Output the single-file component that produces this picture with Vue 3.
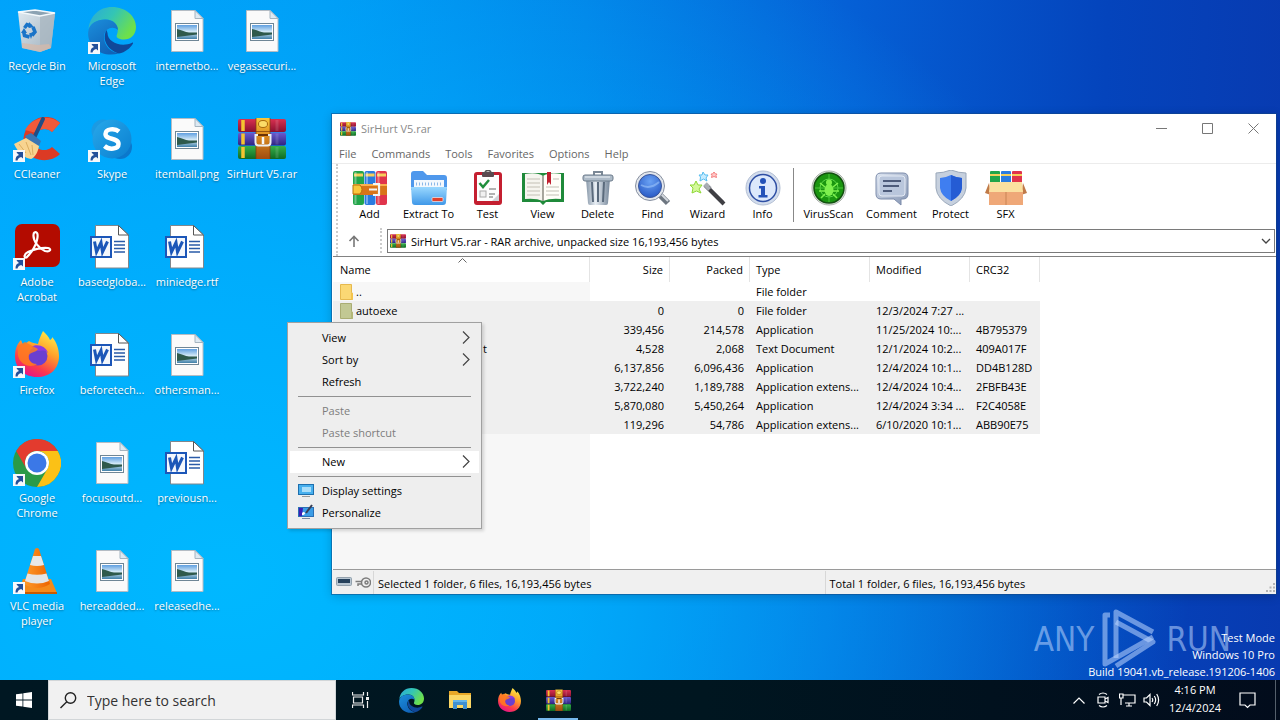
<script setup>
import { ref } from 'vue'

// desktop icons, filled column by column
const shortcuts = [
  { label: 'Recycle Bin', icon: 'bin' },
  { label: 'CCleaner', icon: 'ccleaner', link: true },
  { label: 'Adobe Acrobat', icon: 'acrobat', link: true },
  { label: 'Firefox', icon: 'firefox', link: true },
  { label: 'Google Chrome', icon: 'chrome', link: true },
  { label: 'VLC media player', icon: 'vlc', link: true },
  { label: 'Microsoft Edge', icon: 'edge', link: true },
  { label: 'Skype', icon: 'skype', link: true },
  { label: 'basedgloba...', icon: 'word' },
  { label: 'beforetech...', icon: 'word' },
  { label: 'focusoutd...', icon: 'image' },
  { label: 'hereadded...', icon: 'image' },
  { label: 'internetbo...', icon: 'image' },
  { label: 'itemball.png', icon: 'image' },
  { label: 'miniedge.rtf', icon: 'word' },
  { label: 'othersman...', icon: 'image' },
  { label: 'previousn...', icon: 'word' },
  { label: 'releasedhe...', icon: 'image' },
  { label: 'vegassecuri...', icon: 'image' },
  { label: 'SirHurt V5.rar', icon: 'rar' },
]

const menus = ['File', 'Commands', 'Tools', 'Favorites', 'Options', 'Help']

const tools = [
  { label: 'Add', icon: 'add' },
  { label: 'Extract To', icon: 'extract', wide: true },
  { label: 'Test', icon: 'test' },
  { label: 'View', icon: 'view' },
  { label: 'Delete', icon: 'delete' },
  { label: 'Find', icon: 'find' },
  { label: 'Wizard', icon: 'wizard' },
  { label: 'Info', icon: 'info' },
]

const extraTools = [
  { label: 'VirusScan', icon: 'virus', wide: true },
  { label: 'Comment', icon: 'comment', wide: true },
  { label: 'Protect', icon: 'protect' },
  { label: 'SFX', icon: 'sfx' },
]

const files = [
  { name: '..', icon: 'folder', size: '', packed: '', type: 'File folder', modified: '', crc: '' },
  { name: 'autoexe', icon: 'folder', size: '0', packed: '0', type: 'File folder', modified: '12/3/2024 7:27 ...', crc: '', selected: true },
  { name: '', size: '339,456', packed: '214,578', type: 'Application', modified: '11/25/2024 10:...', crc: '4B795379', selected: true },
  { name: 't', tail: true, size: '4,528', packed: '2,068', type: 'Text Document', modified: '12/1/2024 10:2...', crc: '409A017F', selected: true },
  { name: '', size: '6,137,856', packed: '6,096,436', type: 'Application', modified: '12/4/2024 10:1...', crc: 'DD4B128D', selected: true },
  { name: '', size: '3,722,240', packed: '1,189,788', type: 'Application extens...', modified: '12/4/2024 10:4...', crc: '2FBFB43E', selected: true },
  { name: '', size: '5,870,080', packed: '5,450,264', type: 'Application', modified: '12/4/2024 3:34 ...', crc: 'F2C4058E', selected: true },
  { name: '', size: '119,296', packed: '54,786', type: 'Application extens...', modified: '6/10/2020 10:1...', crc: 'ABB90E75', selected: true },
]

const contextMenu = [
  [{ label: 'View', sub: true }, { label: 'Sort by', sub: true }, { label: 'Refresh' }],
  [{ label: 'Paste', disabled: true }, { label: 'Paste shortcut', disabled: true }],
  [{ label: 'New', sub: true }],
  [{ label: 'Display settings', icon: 'display' }, { label: 'Personalize', icon: 'personalize' }],
]

const pinned = [
  { icon: 'edge', size: 25 },
  { icon: 'explorer', size: 24 },
  { icon: 'firefox', size: 25 },
  { icon: 'rar', size: 25, active: true },
]

const hovered = ref('New')
const search = ref('')
</script>

<template>
  <!-- shared icons -->
  <svg class="defs" width="0" height="0">
    <defs>
      <linearGradient id="gBin" x1="0" y1="0" x2="1" y2="1">
        <stop offset="0" stop-color="#dfe9f0" /><stop offset="1" stop-color="#9fb0bd" />
      </linearGradient>
      <linearGradient id="gEdgeTop" x1="0" y1="0" x2="1" y2="0.5">
        <stop offset="0" stop-color="#2aa8dc" /><stop offset="0.5" stop-color="#33c5b5" /><stop offset="1" stop-color="#6ee04a" />
      </linearGradient>
      <linearGradient id="gEdgeLeft" x1="0" y1="0" x2="0.6" y2="1">
        <stop offset="0" stop-color="#1b8fdc" /><stop offset="1" stop-color="#1063b8" />
      </linearGradient>
      <linearGradient id="gSkype" x1="0" y1="0" x2="1" y2="1">
        <stop offset="0" stop-color="#28a8ea" /><stop offset="1" stop-color="#0a7fd0" />
      </linearGradient>
      <linearGradient id="gFox" x1="0.8" y1="0" x2="0.3" y2="1">
        <stop offset="0" stop-color="#fff04a" /><stop offset="0.4" stop-color="#ffa12a" /><stop offset="0.75" stop-color="#fb3b4c" /><stop offset="1" stop-color="#e5128a" />
      </linearGradient>
      <linearGradient id="gOrange" x1="0" y1="0" x2="1" y2="0">
        <stop offset="0" stop-color="#ff9a2a" /><stop offset="1" stop-color="#ec6400" />
      </linearGradient>
      <linearGradient id="gPhoto" x1="0" y1="0" x2="0" y2="1">
        <stop offset="0" stop-color="#5f9fe0" /><stop offset="0.5" stop-color="#d9edf8" /><stop offset="1" stop-color="#3f7fa8" />
      </linearGradient>
      <linearGradient id="gRed" x1="0" y1="0" x2="0" y2="1">
        <stop offset="0" stop-color="#d83050" /><stop offset="1" stop-color="#8a1030" />
      </linearGradient>
      <linearGradient id="gViolet" x1="0" y1="0" x2="0" y2="1">
        <stop offset="0" stop-color="#6a5ad0" /><stop offset="1" stop-color="#2f2480" />
      </linearGradient>
      <linearGradient id="gGreen" x1="0" y1="0" x2="0" y2="1">
        <stop offset="0" stop-color="#35b04a" /><stop offset="1" stop-color="#0f6a24" />
      </linearGradient>
      <linearGradient id="gGold" x1="0" y1="0" x2="0" y2="1">
        <stop offset="0" stop-color="#f8c83c" /><stop offset="0.4" stop-color="#e09020" /><stop offset="1" stop-color="#a04c10" />
      </linearGradient>
      <linearGradient id="gBlue" x1="0" y1="0" x2="0" y2="1">
        <stop offset="0" stop-color="#9ad8ff" /><stop offset="1" stop-color="#3f98e8" />
      </linearGradient>
      <linearGradient id="gSteel" x1="0" y1="0" x2="1" y2="0">
        <stop offset="0" stop-color="#8797a8" /><stop offset="0.4" stop-color="#e8eef4" /><stop offset="1" stop-color="#76879a" />
      </linearGradient>
      <linearGradient id="gComment" x1="0" y1="0" x2="1" y2="1">
        <stop offset="0" stop-color="#dfe7f3" /><stop offset="1" stop-color="#8494b2" />
      </linearGradient>
      <radialGradient id="gLens" cx="0.5" cy="0.3" r="0.8">
        <stop offset="0" stop-color="#6aa2f4" /><stop offset="1" stop-color="#1f50c0" />
      </radialGradient>
    </defs>

    <symbol id="link" viewBox="0 0 12 12">
      <rect width="12" height="12" fill="#f6f8fb" />
      <path d="M2.500 10.500C2.500 7.500 3.500 5.500 6 5L4.200 3.200L3.500 2H10V8.500L8.200 7C6 7.500 5 8.500 4.500 10.500Z" fill="#24509a" />
    </symbol>

    <symbol id="bin" viewBox="0 0 48 48">
      <path d="M5 5L22 3L42 6L38 41L27 45L9 41Z" fill="url(#gBin)" />
      <path d="M27 9L42 6L38 41L27 45Z" fill="#a9b6c1" opacity="0.8" />
      <path d="M5 5L22 3L42 6L27 9Z" fill="#8ca3b3" stroke="#f3f8fb" stroke-width="1.500" />
      <path d="M9 41L27 45L38 41L36 37L25 38L9 36Z" fill="#d8b9a8" opacity="0.7" />
      <g fill="none" stroke="#1a74c8" stroke-width="3.500">
        <path d="M11.500 21L14 17.500L18 19" />
        <path d="M20 20L22 25L19 28.500" />
        <path d="M16.500 30L11.500 28.500L10.500 24" />
      </g>
      <path d="M16 15L21 20L15.500 21ZM20.500 25L18 32L16 26.500ZM8 26L11 21L14 26Z" fill="#1a74c8" />
    </symbol>

    <symbol id="edge" viewBox="0 0 48 48">
      <path d="M0.500 22C2 9 11 0 24 0C38 0 48 9.500 48 20C48 28 42.500 32.500 36 32.500C30 32.500 27.500 30 29 27.500C31 24 30 13 18 12.500C9 12.300 2.500 17 0.500 22Z" fill="url(#gEdgeTop)" />
      <path d="M0.200 25C1 16.500 9 12.500 17 12.500C26 12.500 30 18 30 23C25 18.500 17 21 16 29C15.500 38 22 45 31 46.500C13 51.500 -1 39 0.200 25Z" fill="url(#gEdgeLeft)" />
      <path d="M18.500 23C14 31 18 42.500 31 46.500C37 45.500 42.500 41 45 36.500C45.300 35.500 44.500 35.300 44 35.700C33 41 19.500 35 19.500 26Z" fill="#10489a" />
    </symbol>

    <symbol id="ccleaner" viewBox="0 0 48 48">
      <path d="M47 8L39 17C33 11 22 14 21 24C20 33 31 39 39 32L47 39C37 49 19 46 13 36C5 19 18 1 33 2C39 2 43 4 47 8Z" fill="#dc3a24" />
      <path d="M47 8L39 17C35 13 27 13 23 18L12 15C18 3 36 -2 47 8Z" fill="#f05a3a" />
      <path d="M30 4L21 23" stroke="#1f4d86" stroke-width="4" stroke-linecap="round" />
      <path d="M12 21L18 18L28 26L26 31L17 29Z" fill="#3a76b4" />
      <path d="M1 29L13 23L26 31C25 38 21 43 18 44C12 43 6 39 1 29Z" fill="#f8d490" />
      <path d="M6 29L13 38M13 27L18 40M19 30L20 40" stroke="#dcae60" stroke-width="1" />
    </symbol>

    <symbol id="skype" viewBox="0 0 48 48">
      <circle cx="15" cy="16" r="11.500" fill="#1c9ae2" />
      <circle cx="32" cy="32" r="12" fill="#0b78cc" />
      <circle cx="24" cy="24" r="19.500" fill="url(#gSkype)" />
      <path d="M31 16.500C27 13 17.500 13.500 17.500 19C17.500 25.500 30.500 22 30.500 29C30.500 34.500 21 35 16.500 31" fill="none" stroke="#fff" stroke-width="4.500" />
    </symbol>

    <symbol id="acrobat" viewBox="0 0 48 48">
      <rect x="2" y="1" width="45" height="43" rx="7" fill="#b30b00" />
      <path d="M21.500 9.500C24 8 25.500 11 24 17C22 26 17 31 13.500 34.500C10.500 35 11 31 15 29C22 26 30 24.500 35 25C39 26 37 29.500 32 28C26 25.500 20 18 20.500 12C20.500 10.500 21 9.800 21.500 9.500Z" fill="none" stroke="#fff" stroke-width="2.200" />
    </symbol>

    <symbol id="firefox" viewBox="0 0 48 48">
      <path d="M30 0C33 3 36 6 37 9C39 8 39 7 39 6C44 11 46 19 46 25C46 38 37 46 24 46C11 46 2 37 2 25C2 18 4 13 8 9L10 14L16 10C19 12 22 12 25 13C26 8 28 4 30 0Z" fill="url(#gFox)" />
      <circle cx="25" cy="25" r="9.500" fill="#6a3fd0" />
      <path d="M18 16C24 12 33 15 35 22C31 18 28 20 25 20Z" fill="#8d3be0" />
      <path d="M5 15L12 11L25 18C23 22 19 20 16 24C14 28 18 33 24 33C17 38 6 33 5 24Z" fill="#ff7a20" opacity="0.85" />
    </symbol>

    <symbol id="chrome" viewBox="0 0 48 48">
      <circle cx="24" cy="24" r="24" fill="#2a9a48" />
      <path d="M3.200 12A24 24 0 0 1 44.800 12H24A12 12 0 0 0 13.600 30Z" fill="#e33b2e" />
      <path d="M44.800 12A24 24 0 0 1 24 48L34.400 30A12 12 0 0 0 24 12Z" fill="#fbc116" />
      <circle cx="24" cy="24" r="12" fill="#fff" />
      <circle cx="24" cy="24" r="9.500" fill="#3b78e7" />
    </symbol>

    <symbol id="vlc" viewBox="0 0 48 48">
      <path d="M10 32H38L44 46H5Z" fill="#f58a1a" />
      <path d="M5 45L44 45L44 47H4Z" fill="#c85a00" />
      <path d="M22 2Q24 0 26 2L37 37Q24 45 11 37Z" fill="url(#gOrange)" />
      <path d="M20 9H28L31 18Q24 20 17 18Z" fill="#e8e8e8" />
      <path d="M14.500 26.500Q24 29 33.500 26.500L36 34Q24 39 12 34Z" fill="#e4e4e4" />
    </symbol>

    <symbol id="image" viewBox="0 0 48 48">
      <path d="M8.500 3.500H32L40 11.500V44.500H8.500Z" fill="#fafafa" stroke="#b4bcc4" />
      <path d="M32 3.500V11.500H40Z" fill="#dde9f2" stroke="#a4b4c0" />
      <rect x="12.500" y="16.500" width="23" height="17" fill="#fff" stroke="#6f8696" />
      <rect x="14" y="18" width="20" height="14" fill="url(#gPhoto)" />
      <path d="M14 22C19 23 22 25 26 25.500H34V27.500L14 30Z" fill="#2f5a4c" />
    </symbol>

    <symbol id="word" viewBox="0 0 48 48">
      <path d="M7.500 2.500H30.500L40.500 12V45H7.500Z" fill="#fff" stroke="#80868c" />
      <path d="M30.500 2.500V12H40.500Z" fill="#fff" stroke="#555" />
      <path d="M26 18.500H37M26 22H37M26 25.500H37M26 29H37" stroke="#2a5ba8" stroke-width="1.300" />
      <rect x="2" y="13" width="22" height="22" fill="#1c56b8" />
      <rect x="4" y="15" width="18" height="18" fill="#f4f7fc" />
      <path d="M6.500 18.500L8.500 29L13 19.500L14.500 29L19.500 18.500" fill="none" stroke="#1c56b8" stroke-width="3" />
    </symbol>

    <symbol id="rar" viewBox="0 0 48 48">
      <rect x="0" y="4" width="48" height="13" rx="2" fill="url(#gRed)" />
      <rect x="0" y="17.500" width="48" height="13" rx="2" fill="url(#gViolet)" />
      <rect x="0" y="31" width="48" height="13" rx="2" fill="url(#gGreen)" />
      <path d="M5 5V16M5 18.500V29.500M5 32V43" stroke="#f4c430" stroke-width="3.500" />
      <path d="M39 5V16M39 18.500V29.500M39 32V43" stroke="#fff" stroke-opacity="0.12" stroke-width="3" />
      <rect x="18" y="3" width="14" height="41" fill="url(#gGold)" />
      <path d="M18 3V44M32 3V44M18 16.500H32" stroke="#7a3c08" stroke-opacity="0.7" />
      <ellipse cx="25" cy="9" rx="4.500" ry="3.500" fill="#fbdc68" stroke="#a8680c" />
      <path d="M19 20H31" stroke="#6a3408" stroke-width="2" />
      <path d="M20 20H17.500V27.500Q17.500 30.500 20.500 30.500H29.500Q32.500 30.500 32.500 27.500V20H30" fill="none" stroke="#eceff2" stroke-width="2" />
      <path d="M25 22V29" stroke="#f6f8fa" stroke-width="2.500" />
    </symbol>

    <symbol id="add" viewBox="0 0 36 36">
      <rect x="1" y="1" width="11" height="34" rx="2" fill="#22a54a" />
      <rect x="12.500" y="1" width="11" height="34" rx="2" fill="#2a7be0" />
      <rect x="24" y="1" width="11" height="34" rx="2" fill="#e0344c" />
      <path d="M2 5H11M13.500 5H22.500M25 5H34" stroke="#f6cf5a" stroke-width="3" />
      <path d="M3.500 2V34M15 2V34M26.500 2V34" stroke="#fff" stroke-opacity="0.35" stroke-width="2" />
      <rect x="1" y="14" width="34" height="11" fill="#d8741a" />
      <path d="M1 15H35" stroke="#f9b050" stroke-width="2" />
      <path d="M1 15H8Q12 19.500 8 24H1Z" fill="#fbc83c" stroke="#b8700c" />
      <path d="M21 14H27V25H21M17 19.500H25" fill="none" stroke="#f2f4f7" stroke-width="2.200" />
    </symbol>

    <symbol id="extract" viewBox="0 0 36 36">
      <path d="M0 4Q0 1 3 1H12L16 5H33Q36 5 36 8V20H0Z" fill="#4f98ec" />
      <rect x="3" y="10" width="30" height="14" fill="#f4f8fd" />
      <path d="M5 14H31" stroke="#8cb8e8" stroke-width="3" stroke-dasharray="1 2" />
      <path d="M0 17H36L35 32Q35 35 32 35H4Q1 35 1 32Z" fill="url(#gBlue)" />
      <rect x="21" y="27.500" width="11" height="4" rx="1" fill="#e2402c" stroke="#fff" stroke-width="0.600" />
    </symbol>

    <symbol id="test" viewBox="0 0 36 36">
      <rect x="4" y="2" width="28" height="33" rx="3" fill="#c41f30" />
      <rect x="7" y="5" width="22" height="26" fill="#fdfdfd" />
      <path d="M22 31L29 24V31Z" fill="#d0d3d8" />
      <rect x="12" y="2" width="12" height="5" rx="1" fill="#5a4a50" />
      <path d="M15 3C15 -0.500 21 -0.500 21 3" fill="none" stroke="#555" stroke-width="1.500" />
      <path d="M9.500 13L13 17L19 10" fill="none" stroke="#1f8f3c" stroke-width="2.500" />
      <path d="M19 19H26M19 24H25M19 27H23" stroke="#999" stroke-width="1.500" />
      <rect x="10" y="21" width="6" height="6" fill="#f1f1f1" stroke="#aaa" />
    </symbol>

    <symbol id="view" viewBox="0 0 42 36">
      <path d="M0 3H42V32H24L21 35L18 32H0Z" fill="#1f8a3a" />
      <path d="M3 4Q15 2 21 6V31Q14 28 3 29Z" fill="#f6f5ef" />
      <path d="M39 4Q27 2 21 6V31Q28 28 39 29Z" fill="#fffef8" />
      <path d="M5 9H18M5 13H18M5 17H18M5 21H18M5 25H18M31 9H37M24 17H37M24 21H37M24 25H37" stroke="#c3c0b5" />
      <path d="M21 6V31" stroke="#8b8a80" stroke-width="1.500" />
      <path d="M25 2H29V15L27 12L25 15Z" fill="#c02030" />
    </symbol>

    <symbol id="delete" viewBox="0 0 36 36">
      <path d="M6 9H30L28 33Q28 35 26 35H10Q8 35 8 33Z" fill="url(#gSteel)" />
      <path d="M12 12L13 32M18 12V32M24 12L23 32" stroke="#5a6a7c" stroke-width="2" />
      <path d="M14 5V2H22V5" fill="none" stroke="#7b8896" stroke-width="2" />
      <rect x="3" y="5" width="30" height="6" rx="2" fill="#aebbc8" stroke="#6b7a8a" />
      <path d="M5 7H30" stroke="#eef3f7" />
    </symbol>

    <symbol id="find" viewBox="0 0 36 36">
      <path d="M25 25L33 33" stroke="#6d7680" stroke-width="6" />
      <path d="M25 23L33 31" stroke="#d3d8de" stroke-width="2" />
      <circle cx="15" cy="16" r="14.500" fill="#e2e6ec" stroke="#8790a0" />
      <circle cx="15" cy="16" r="11.500" fill="url(#gLens)" stroke="#3a559a" />
      <path d="M6 15Q15 20 24 12" fill="none" stroke="#9cc4fa" stroke-opacity="0.6" stroke-width="2" />
    </symbol>

    <symbol id="wizard" viewBox="0 0 36 36">
      <path d="M15 15L34 34" stroke="#3f3f44" stroke-width="4" />
      <path d="M15 14L20 19" stroke="#a9adb4" stroke-width="5" />
      <path d="M19 16L34 31" stroke="#8a8a90" />
      <path d="M6 11L8 15L12 15L9 19L11 23L6.500 21L2 23L3 18L0 15L4 15Z" fill="#d4f89a" stroke="#8ed836" />
      <path d="M13 2L15 5L18 5L16 8L17 11L13.500 9L10 11L10.500 7L9 5L12 5Z" fill="#c8ecff" stroke="#56bdf0" />
      <path d="M24 2L25.500 4L27 4L26 5.500L26.500 7.500L24 6.500L21.500 7.500L22 5.500L21 4L22.500 4Z" fill="#ffc8c8" stroke="#f48080" />
    </symbol>

    <symbol id="info" viewBox="0 0 36 36">
      <circle cx="18" cy="18" r="17" fill="#d3dded" stroke="#b3bfd4" />
      <circle cx="18" cy="18" r="13.500" fill="#dce8fb" stroke="#2f4fa4" stroke-width="1.500" />
      <circle cx="18" cy="11" r="3" fill="#2452b8" />
      <path d="M14 16H20V25H22.500V27.500H13.500V25H16V18.500H14Z" fill="#2452b8" />
    </symbol>

    <symbol id="virus" viewBox="0 0 36 36">
      <circle cx="18" cy="18" r="17" fill="#e1e6e1" stroke="#a8b0a8" />
      <circle cx="18" cy="18" r="15" fill="#1a9610" stroke="#11500e" stroke-width="1.500" />
      <circle cx="18" cy="18" r="9" fill="none" stroke="#5ed84a" />
      <path d="M18 4V32M4 18H32" stroke="#4cc83a" />
      <ellipse cx="18" cy="20" rx="4.500" ry="6" fill="#7ef04e" />
      <circle cx="18" cy="12.500" r="3" fill="#7ef04e" />
      <path d="M14 17L9 13M22 17L27 13M14 21H8M22 21H28M14 24L10 28M22 24L26 28" stroke="#7ef04e" stroke-width="1.600" />
    </symbol>

    <symbol id="comment" viewBox="0 0 36 36">
      <path d="M7 3H29Q34 3 34 8V24Q34 29 29 29H27V35L20 29H7Q2 29 2 24V8Q2 3 7 3Z" fill="url(#gComment)" stroke="#7d8cab" />
      <rect x="5" y="6" width="26" height="20" rx="3" fill="#b9c6dc" stroke="#e4eaf4" />
      <path d="M9 11H27M9 16H25M9 21H18" stroke="#4d5b7a" stroke-width="2" />
    </symbol>

    <symbol id="protect" viewBox="0 0 36 36">
      <path d="M18 0Q26 3 33 3V18Q32 29 18 36Q4 29 3 18V3Q10 3 18 0Z" fill="#c6d0de" stroke="#9aa8ba" />
      <path d="M18 5Q24 8 29 8V18Q28 26 18 31Q8 26 7 18V8Q12 8 18 5Z" fill="#3f7ef0" />
      <path d="M18 5Q24 8 29 8V18Q28 26 18 31Z" fill="#255cd4" />
    </symbol>

    <symbol id="sfx" viewBox="0 0 42 36">
      <rect x="5" y="1" width="10" height="14" rx="1" fill="#22a54a" />
      <rect x="16" y="1" width="10" height="14" rx="1" fill="#2a7be0" />
      <rect x="27" y="1" width="10" height="14" rx="1" fill="#e0344c" />
      <path d="M5 5H15M16 5H26M27 5H37" stroke="#f6cf5a" stroke-width="2" />
      <path d="M4 13L0 23L6 25ZM38 13L42 23L36 25Z" fill="#c07a48" />
      <rect x="4" y="20" width="34" height="15" fill="#efa878" />
      <path d="M21 20V35" stroke="#c98454" />
      <path d="M5 12H37L38 22H4Z" fill="#fbe0a0" />
    </symbol>

    <symbol id="folder" viewBox="0 0 14 16">
      <path d="M0.500 0.500H11.500V8L12.500 10V15.500H0.500Z" fill="#fbd874" stroke="#e6b94e" />
      <path d="M11 9H13V15.500H11Z" fill="#f4c44c" />
    </symbol>

    <symbol id="display" viewBox="0 0 16 16">
      <rect x="0.500" y="2.500" width="15" height="10" fill="#48b0ee" stroke="#1d6fae" />
      <rect x="4" y="5" width="9" height="5" fill="#a9defa" />
      <path d="M4 14.500H12" stroke="#9a9a9a" />
    </symbol>

    <symbol id="personalize" viewBox="0 0 16 16">
      <rect x="0.500" y="3.500" width="15" height="9" fill="#3c9de6" stroke="#2b6fb4" />
      <path d="M1 4H5L4 12H1Z" fill="#3a1fb8" />
      <path d="M4 9Q6 7 7 9Q7 11 4 11Z" fill="#fff" />
      <path d="M8 9L14 1" stroke="#3a3f55" stroke-width="2" />
      <path d="M4 14.500H12" stroke="#7b8aa0" />
    </symbol>

    <symbol id="explorer" viewBox="0 0 24 24">
      <path d="M1 3H9L11 5H23V20H1Z" fill="#e8a828" />
      <path d="M1 7H23V20H1Z" fill="#fbd765" />
      <path d="M5 12H19V21H15V17H9V21H5Z" fill="#3f8fd0" />
      <path d="M5 12H19V14H5Z" fill="#63b4ea" />
    </symbol>
  </svg>

  <div class="screen">
    <main class="desktop">
      <div class="icons">
        <button v-for="s in shortcuts" :key="s.label" class="shortcut">
          <span class="pic">
            <svg width="48" height="48"><use :href="'#' + s.icon" /></svg>
            <svg v-if="s.link" class="arrow" width="12" height="12"><use href="#link" /></svg>
          </span>
          <span class="label">{{ s.label }}</span>
        </button>
      </div>

      <div class="brand">
        <span>ANY</span>
        <svg width="56" height="62" viewBox="0 0 56 62" fill="none" stroke="currentColor" stroke-width="5" stroke-linejoin="round">
          <path d="M8 7H3V56L12 51L51 29" />
          <path d="M51 24L14 4V50" />
          <path d="M14 14L51 34L14 58" />
        </svg>
        <span>RUN</span>
      </div>
      <p class="build">Test Mode<br>Windows 10 Pro<br>Build 19041.vb_release.191206-1406</p>

      <section class="window">
        <header class="titlebar">
          <svg width="16" height="16"><use href="#rar" /></svg>
          <span class="title">SirHurt V5.rar</span>
          <button class="caption" aria-label="Minimize"><svg width="11" height="11"><path d="M0 5.500H11" /></svg></button>
          <button class="caption" aria-label="Maximize"><svg width="11" height="11"><path d="M0.500 0.500H10.500V10.500H0.500Z" /></svg></button>
          <button class="caption" aria-label="Close"><svg width="11" height="11"><path d="M0.500 0.500L10.500 10.500M10.500 0.500L0.500 10.500" /></svg></button>
        </header>

        <nav class="menubar">
          <button v-for="m in menus" :key="m">{{ m }}</button>
        </nav>

        <div class="bars">
          <div class="toolbar">
            <button v-for="t in tools" :key="t.label" class="tool" :class="{ wide: t.wide }">
              <svg width="42" height="36"><use :href="'#' + t.icon" /></svg>
              <span>{{ t.label }}</span>
            </button>
            <i class="divider"></i>
            <button v-for="t in extraTools" :key="t.label" class="tool" :class="{ wide: t.wide }">
              <svg width="42" height="36"><use :href="'#' + t.icon" /></svg>
              <span>{{ t.label }}</span>
            </button>
          </div>
          <div class="address">
            <button class="up" aria-label="Up one level">
              <svg width="12" height="12" fill="none" stroke="#777" stroke-width="1.600"><path d="M6 12V1.500M1.500 6L6 1.500L10.500 6" /></svg>
            </button>
            <div class="path">
              <svg width="16" height="16"><use href="#rar" /></svg>
              <select aria-label="Archive path">
                <option>SirHurt V5.rar - RAR archive, unpacked size 16,193,456 bytes</option>
              </select>
              <svg width="10" height="6" fill="none" stroke="#444" stroke-width="1.300"><path d="M1 1L5 5L9 1" /></svg>
            </div>
          </div>
        </div>

        <div class="list">
          <table>
            <colgroup>
              <col class="c-name"><col class="c-size"><col class="c-size"><col class="c-type"><col class="c-date"><col class="c-crc">
            </colgroup>
            <thead>
              <tr>
                <th>
                  Name
                  <svg class="sort" width="9" height="5" fill="none" stroke="#666"><path d="M0.500 4.500L4.500 0.500L8.500 4.500" /></svg>
                </th>
                <th class="num">Size</th>
                <th class="num">Packed</th>
                <th>Type</th>
                <th>Modified</th>
                <th>CRC32</th>
              </tr>
            </thead>
            <tbody>
              <tr v-for="f in files" :key="f.type + f.crc + f.modified" :class="{ selected: f.selected }">
                <td>
                  <div class="file" :class="{ tail: f.tail }">
                    <svg v-if="f.icon" width="14" height="16"><use :href="'#' + f.icon" /></svg>
                    <span>{{ f.name }}</span>
                  </div>
                </td>
                <td class="num">{{ f.size }}</td>
                <td class="num">{{ f.packed }}</td>
                <td>{{ f.type }}</td>
                <td>{{ f.modified }}</td>
                <td>{{ f.crc }}</td>
              </tr>
            </tbody>
          </table>
        </div>

        <footer class="status">
          <div class="state">
            <svg width="16" height="9"><rect x="0.500" y="0.500" width="15" height="8" rx="1" fill="#b8c6d2" stroke="#93a1ad" /><rect x="2" y="2" width="12" height="4" fill="#26415c" /></svg>
            <svg width="16" height="11" fill="none" stroke="#7c7c7c" stroke-width="1.500"><circle cx="11" cy="5.500" r="4.500" /><circle cx="11.500" cy="5.500" r="1.500" /><path d="M7 4.500H0.500M7 7H3V9" /></svg>
          </div>
          <div class="half">Selected 1 folder, 6 files, 16,193,456 bytes</div>
          <div class="half">Total 1 folder, 6 files, 16,193,456 bytes</div>
          <svg class="grip" width="9" height="9" fill="#b4b4b4"><path d="M7 0H9V2H7ZM7 3.500H9V5.500H7ZM7 7H9V9H7ZM3.500 3.500H5.500V5.500H3.500ZM3.500 7H5.500V9H3.500ZM0 7H2V9H0Z" /></svg>
        </footer>
      </section>

      <div class="context" role="menu">
        <div v-for="(group, i) in contextMenu" :key="i" class="group">
          <button
            v-for="item in group"
            :key="item.label"
            role="menuitem"
            :disabled="item.disabled"
            :class="{ hover: hovered === item.label }"
            @mouseenter="hovered = item.label"
          >
            <span class="glyph"><svg v-if="item.icon" width="16" height="16"><use :href="'#' + item.icon" /></svg></span>
            <span class="text">{{ item.label }}</span>
            <svg v-if="item.sub" width="8" height="13" fill="none" stroke="#444" stroke-width="1.200"><path d="M1 0.500L7 6.500L1 12.500" /></svg>
          </button>
        </div>
      </div>
    </main>

    <footer class="taskbar">
      <button class="start" aria-label="Start">
        <svg width="16" height="16" fill="#fff"><path d="M0 2.300L6.500 1.400V7.600H0ZM7.300 1.300L16 0V7.600H7.300ZM0 8.400H6.500V14.600L0 13.700ZM7.300 8.400H16V16L7.300 14.700Z" /></svg>
      </button>
      <label class="search">
        <svg width="17" height="17" fill="none" stroke="#222" stroke-width="1.400"><circle cx="10.500" cy="6" r="5.200" /><path d="M6.800 9.700L0.500 16" /></svg>
        <input v-model="search" type="text" placeholder="Type here to search" aria-label="Search">
      </label>
      <button class="app" aria-label="Task View">
        <svg width="17" height="16" fill="none" stroke="#eee" stroke-width="1.200">
          <path d="M0.500 0V3H11.500V0M0.500 16V13H11.500V16M1.500 5H10.500V11H1.500ZM15.500 0V4M15.500 9V16" />
          <path d="M14 5H17V8H14Z" fill="#eee" stroke="none" />
        </svg>
      </button>
      <div class="pinned">
        <button v-for="p in pinned" :key="p.icon" class="app" :class="{ active: p.active }" :aria-label="p.icon">
          <svg :width="p.size" :height="p.size"><use :href="'#' + p.icon" /></svg>
        </button>
      </div>
      <div class="tray">
        <svg width="12" height="7"><path d="M0.500 6.500L6 1L11.500 6.500" /></svg>
        <svg width="12" height="16"><path d="M1 5H8V11H1ZM8 7L11 5.500V10.500L8 9M2 2.500Q6 -0.500 10 2.500M2 13.500Q6 16.500 10 13.500" /></svg>
        <svg width="17" height="14"><path d="M4 2H16V10H6M10 10V13M7 13H13M0.500 1H4V5H0.500ZM2 5V12" /></svg>
        <svg width="17" height="14"><path d="M1 5H3.500L7 1.500V12.500L3.500 9H1ZM9 5Q10.500 7 9 9M11.300 3Q14 7 11.300 11M13.700 1Q17.500 7 13.700 13" /></svg>
      </div>
      <div class="clock">4:16 PM<br>12/4/2024</div>
      <button class="notify" aria-label="Notifications">
        <svg width="17" height="17" fill="none" stroke="#fff" stroke-width="1.200"><path d="M1 1H16V13H11L8.500 15.500L6 13H1Z" /></svg>
      </button>
      <button class="peek" aria-label="Show desktop"></button>
    </footer>
  </div>
</template>

<style>
body {
  margin: 0;
}
</style>

<style scoped>
.defs {
  position: absolute;
}
.screen {
  display: flex;
  flex-direction: column;
  height: 100vh;
  overflow: hidden;
  font-family: "Open Sans", "Noto Sans", sans-serif;
  font-size: 11px;
  color: #000;
}
button {
  border: 0;
  padding: 0;
  background: none;
  font: inherit;
  color: inherit;
}
svg {
  display: block;
  flex: none;
}

/* desktop */
.desktop {
  position: relative;
  flex: 1;
  min-height: 0;
  background:
    radial-gradient(ellipse 75% 110% at 18% 85%, #00b8ff 0%, rgba(0, 180, 255, 0.8) 35%, rgba(0, 150, 245, 0) 100%),
    linear-gradient(92deg, #009efa 0%, #0098f4 25%, #0280e6 45%, #0560d6 65%, #0444bc 85%, #083ab0 100%);
}
.icons {
  display: grid;
  grid-auto-flow: column;
  grid-template-rows: repeat(6, 108px);
  grid-auto-columns: 74px;
  column-gap: 1px;
}
.shortcut {
  display: flex;
  flex-direction: column;
  align-items: center;
  padding-top: 7px;
  line-height: 15px;
  color: #fff;
  text-shadow: 0 1px 2px rgba(0, 0, 0, 0.4);
}
.pic {
  position: relative;
  margin-bottom: 3px;
}
.arrow {
  position: absolute;
  left: 0;
  bottom: 1px;
}
.brand {
  position: absolute;
  right: 49px;
  bottom: 10px;
  display: flex;
  align-items: center;
  gap: 8px;
  font-family: "Liberation Sans Narrow", "DejaVu Sans Condensed", sans-serif;
  font-size: 33px;
  color: rgba(190, 215, 255, 0.55);
}
.build {
  position: absolute;
  right: 5px;
  bottom: 0;
  margin: 0;
  line-height: 17px;
  text-align: right;
  color: #fff;
}

/* archive window */
.window {
  position: absolute;
  left: 332px;
  right: 4px;
  top: 114px;
  height: 480px;
  display: flex;
  flex-direction: column;
  background: #fff;
  box-shadow: 0 0 0 1px rgba(20, 70, 130, 0.5), 0 2px 10px rgba(0, 0, 0, 0.2);
}
.titlebar {
  display: flex;
  align-items: center;
  height: 29px;
  padding-left: 8px;
  color: #8a8a8a;
}
.title {
  flex: 1;
  padding-left: 5px;
}
.caption {
  display: grid;
  place-items: center;
  width: 46px;
  height: 29px;
}
.caption svg {
  fill: none;
  stroke: #777;
}
.menubar {
  display: flex;
  gap: 15px;
  height: 20px;
  padding-left: 7px;
  border-bottom: 1px solid #ececec;
  color: #666;
}
.bars {
  margin-left: 4px;
  border-left: 2px dotted #ccc;
}
.toolbar {
  display: flex;
  height: 64px;
  padding-left: 4px;
}
.tool {
  display: flex;
  flex-direction: column;
  align-items: center;
  width: 55px;
  padding-top: 6px;
  line-height: 15px;
  white-space: nowrap;
}
.tool.wide {
  width: 63px;
}
.divider {
  width: 1px;
  height: 54px;
  margin: 4px 3px;
  background: #888;
}
.address {
  display: flex;
  height: 28px;
}
.up {
  display: grid;
  place-items: center;
  width: 44px;
  height: 25px;
  padding-right: 10px;
  border-right: 2px dotted #ccc;
}
.path {
  flex: 1;
  display: flex;
  align-items: center;
  height: 22px;
  margin: 1px 1px 0 5px;
  padding: 0 3px 0 2px;
  border: 1px solid #7a7a7a;
}
.path select {
  flex: 1;
  padding: 0 0 0 5px;
  border: 0;
  background: none;
  font: inherit;
  color: inherit;
  appearance: none;
}
.list {
  flex: 1;
  margin-left: 1px;
  border-top: 1px solid #828282;
  border-bottom: 1px solid #9a9a9a;
  background:
    linear-gradient(#fff, #fff) top / 100% 25px no-repeat,
    linear-gradient(90deg, #f7f7f7 257px, #fff 257px);
}
table {
  width: 707px;
  table-layout: fixed;
  border-collapse: separate;
  border-spacing: 0;
}
.c-name { width: 257px; }
.c-size { width: 80px; }
.c-type { width: 120px; }
.c-date { width: 100px; }
.c-crc { width: 70px; }
th,
td {
  padding: 0 6px;
  box-sizing: border-box;
  white-space: nowrap;
}
th {
  position: relative;
  height: 25px;
  border-right: 1px solid #e4e4e4;
  font-weight: normal;
  text-align: left;
}
td {
  height: 19px;
  line-height: 18px;
}
th:first-child,
td:first-child {
  padding-left: 7px;
}
.sort {
  position: absolute;
  left: 125px;
  top: 1px;
}
.num {
  text-align: right;
}
.selected {
  background: #efefef;
}
.selected .file svg {
  filter: grayscale(0.5) hue-rotate(20deg) brightness(0.9);
}
.file {
  display: flex;
  align-items: center;
  gap: 2px;
}
.file.tail {
  padding-left: 143px;
}
.status {
  display: flex;
  align-items: center;
  height: 24px;
  background: #f0f0f0;
}
.state {
  display: flex;
  gap: 3px;
  width: 37px;
  padding-left: 4px;
}
.half {
  flex: 1;
  padding: 3px 0 0 4px;
  border-left: 1px solid #d7d7d7;
  line-height: 20px;
}
.grip {
  align-self: flex-end;
  margin: 0 1px 2px -10px;
}

/* context menu */
.context {
  position: absolute;
  left: 287px;
  top: 322px;
  width: 195px;
  box-sizing: border-box;
  padding: 4px 2px;
  border: 1px solid #a0a0a0;
  background: #eee;
  box-shadow: 2px 2px 3px rgba(0, 0, 0, 0.15);
}
.group + .group::before {
  content: "";
  display: block;
  height: 1px;
  margin: 3px 8px;
  background: #919191;
}
.group button {
  display: flex;
  align-items: center;
  width: 100%;
  height: 22px;
  padding: 0 9px 2px 8px;
  text-align: left;
}
.group button:disabled {
  color: #7d7d7d;
}
.group button.hover {
  background: #fff;
}
.glyph {
  width: 24px;
}
.text {
  flex: 1;
}

/* taskbar */
.taskbar {
  display: flex;
  align-items: stretch;
  height: 40px;
  background: linear-gradient(90deg, #001722 0%, #001620 55%, #020c1c 100%);
  color: #fff;
}
.start,
.app,
.notify {
  display: grid;
  place-items: center;
  width: 48px;
}
.search {
  display: flex;
  align-items: center;
  width: 288px;
  box-sizing: border-box;
  padding-left: 11px;
  border: 1px solid #d2d6d8;
  background: #f1f1f1;
}
.search input {
  flex: 1;
  min-width: 0;
  padding: 0 0 0 10px;
  border: 0;
  outline: 0;
  background: none;
  font: inherit;
  font-size: 14px;
}
.search input::placeholder {
  color: #333;
}
.pinned {
  display: flex;
  gap: 1px;
  padding-left: 3px;
}
.app.active {
  background: linear-gradient(#76b9ed, #76b9ed) center bottom / 40px 2px no-repeat;
}
.tray {
  display: grid;
  grid-template-columns: repeat(4, 24px);
  place-items: center;
  margin-left: auto;
}
.tray svg {
  fill: none;
  stroke: #fff;
  stroke-width: 1.2;
}
.clock {
  width: 64px;
  padding-top: 1px;
  line-height: 18px;
  text-align: center;
}
.notify {
  width: 40px;
}
.peek {
  width: 5px;
  margin-left: 8px;
  border-left: 1px solid #55606c;
}
</style>
